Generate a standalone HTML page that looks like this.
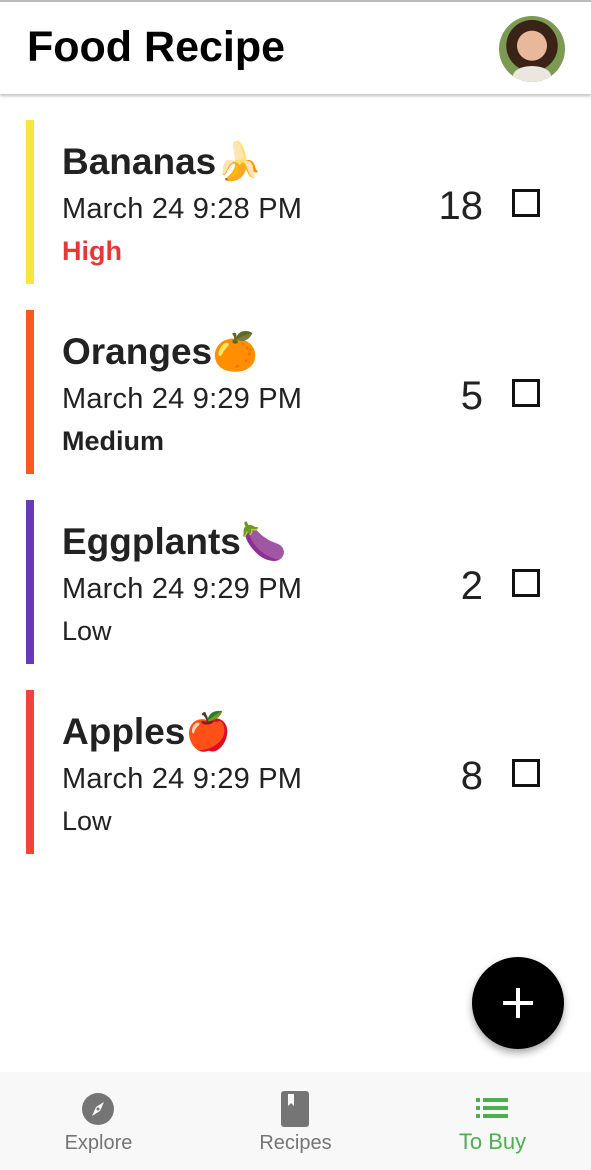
<!DOCTYPE html>
<html><head><meta charset="utf-8"><style>
*{margin:0;padding:0;box-sizing:border-box}
body{width:591px;height:1170px;background:#fff;position:relative;overflow:hidden;font-family:"Liberation Sans","DejaVu Sans",sans-serif;color:#222}
.top{position:absolute;left:0;top:0;width:591px;height:2px;background:#bdbdbd}
.hdr{position:absolute;left:0;top:2px;width:591px;height:92px;background:#fff;box-shadow:0 2px 3px rgba(0,0,0,.25)}
.hdr h1{position:absolute;left:27px;top:21px;font-size:43px;font-weight:bold;color:#000;letter-spacing:0px}
.av{position:absolute;left:499px;top:14px;width:66px;height:66px;border-radius:50%;background:radial-gradient(circle at 50% 45%,#e8b89a 0 30%,#3a2418 31% 52%,#7d9a52 53%);overflow:hidden}
.av:after{content:"";position:absolute;left:14px;top:50px;width:38px;height:20px;border-radius:50% 50% 0 0;background:#ece6e0}
.item{position:absolute;left:26px;width:540px;height:164px}
.bar{position:absolute;left:0;top:0;width:8px;height:164px}
.t{position:absolute;left:36px;top:21px;font-size:37px;font-weight:bold;white-space:nowrap}
.d{position:absolute;left:36px;top:73px;font-size:29px;white-space:nowrap;letter-spacing:0.2px}
.p{position:absolute;left:36px;top:116px;font-size:27px;white-space:nowrap}
.n{position:absolute;right:83px;top:64px;font-size:40px;color:#222}
.cb{position:absolute;left:486px;top:69px;width:28px;height:28px;border:3px solid #111}
.fab{position:absolute;left:472px;top:957px;width:92px;height:92px;border-radius:50%;background:#000;box-shadow:0 4px 8px rgba(0,0,0,.35)}
.fab:before{content:"";position:absolute;left:31px;top:44px;width:30px;height:4px;background:#fff}
.fab:after{content:"";position:absolute;left:44px;top:31px;width:4px;height:30px;background:#fff}
.nav{position:absolute;left:0;top:1072px;width:591px;height:98px;background:#f8f8f8}
.lab{position:absolute;top:60px;font-size:20px;color:#757575;width:197px;text-align:center}
</style></head><body>
<div class="top"></div>
<div class="hdr"><h1>Food Recipe</h1><div class="av"></div></div>

<div class="item" style="top:120px"><div class="bar" style="background:#fbe43b"></div>
<div class="t">Bananas🍌</div><div class="d">March 24 9:28 PM</div><div class="p" style="color:#e53935;font-weight:bold">High</div>
<div class="n">18</div><div class="cb"></div></div>

<div class="item" style="top:310px"><div class="bar" style="background:#ff5722"></div>
<div class="t">Oranges🍊</div><div class="d">March 24 9:29 PM</div><div class="p" style="font-weight:bold">Medium</div>
<div class="n">5</div><div class="cb"></div></div>

<div class="item" style="top:500px"><div class="bar" style="background:#673ab7"></div>
<div class="t">Eggplants🍆</div><div class="d">March 24 9:29 PM</div><div class="p">Low</div>
<div class="n">2</div><div class="cb"></div></div>

<div class="item" style="top:690px"><div class="bar" style="background:#f44336"></div>
<div class="t">Apples🍎</div><div class="d">March 24 9:29 PM</div><div class="p">Low</div>
<div class="n">8</div><div class="cb"></div></div>

<div class="fab"></div>
<div class="nav">
<svg style="position:absolute;left:81px;top:20px" width="34" height="34" viewBox="0 0 34 34"><circle cx="17" cy="17" r="16" fill="#757575"/><path d="M23 10 L19 19 L11 24 L15 15 Z" fill="#f8f8f8"/><circle cx="17" cy="17" r="1.5" fill="#757575"/></svg>
<div class="lab" style="left:0">Explore</div>
<svg style="position:absolute;left:281px;top:19px" width="28" height="36" viewBox="0 0 28 36"><rect x="0" y="0" width="28" height="36" rx="3" fill="#757575"/><path d="M7 3 H13 V15 L10 12 L7 15 Z" fill="#f8f8f8"/></svg>
<div class="lab" style="left:197px">Recipes</div>
<svg style="position:absolute;left:476px;top:26px" width="32" height="20" viewBox="0 0 32 20"><g fill="#4caf50"><rect x="0" y="0" width="4" height="4"/><rect x="7" y="0" width="25" height="4"/><rect x="0" y="8" width="4" height="4"/><rect x="7" y="8" width="25" height="4"/><rect x="0" y="16" width="4" height="4"/><rect x="7" y="16" width="25" height="4"/></g></svg>
<div class="lab" style="left:394px;color:#4caf50;font-size:22px;top:57px">To Buy</div>
</div>
</body></html>
